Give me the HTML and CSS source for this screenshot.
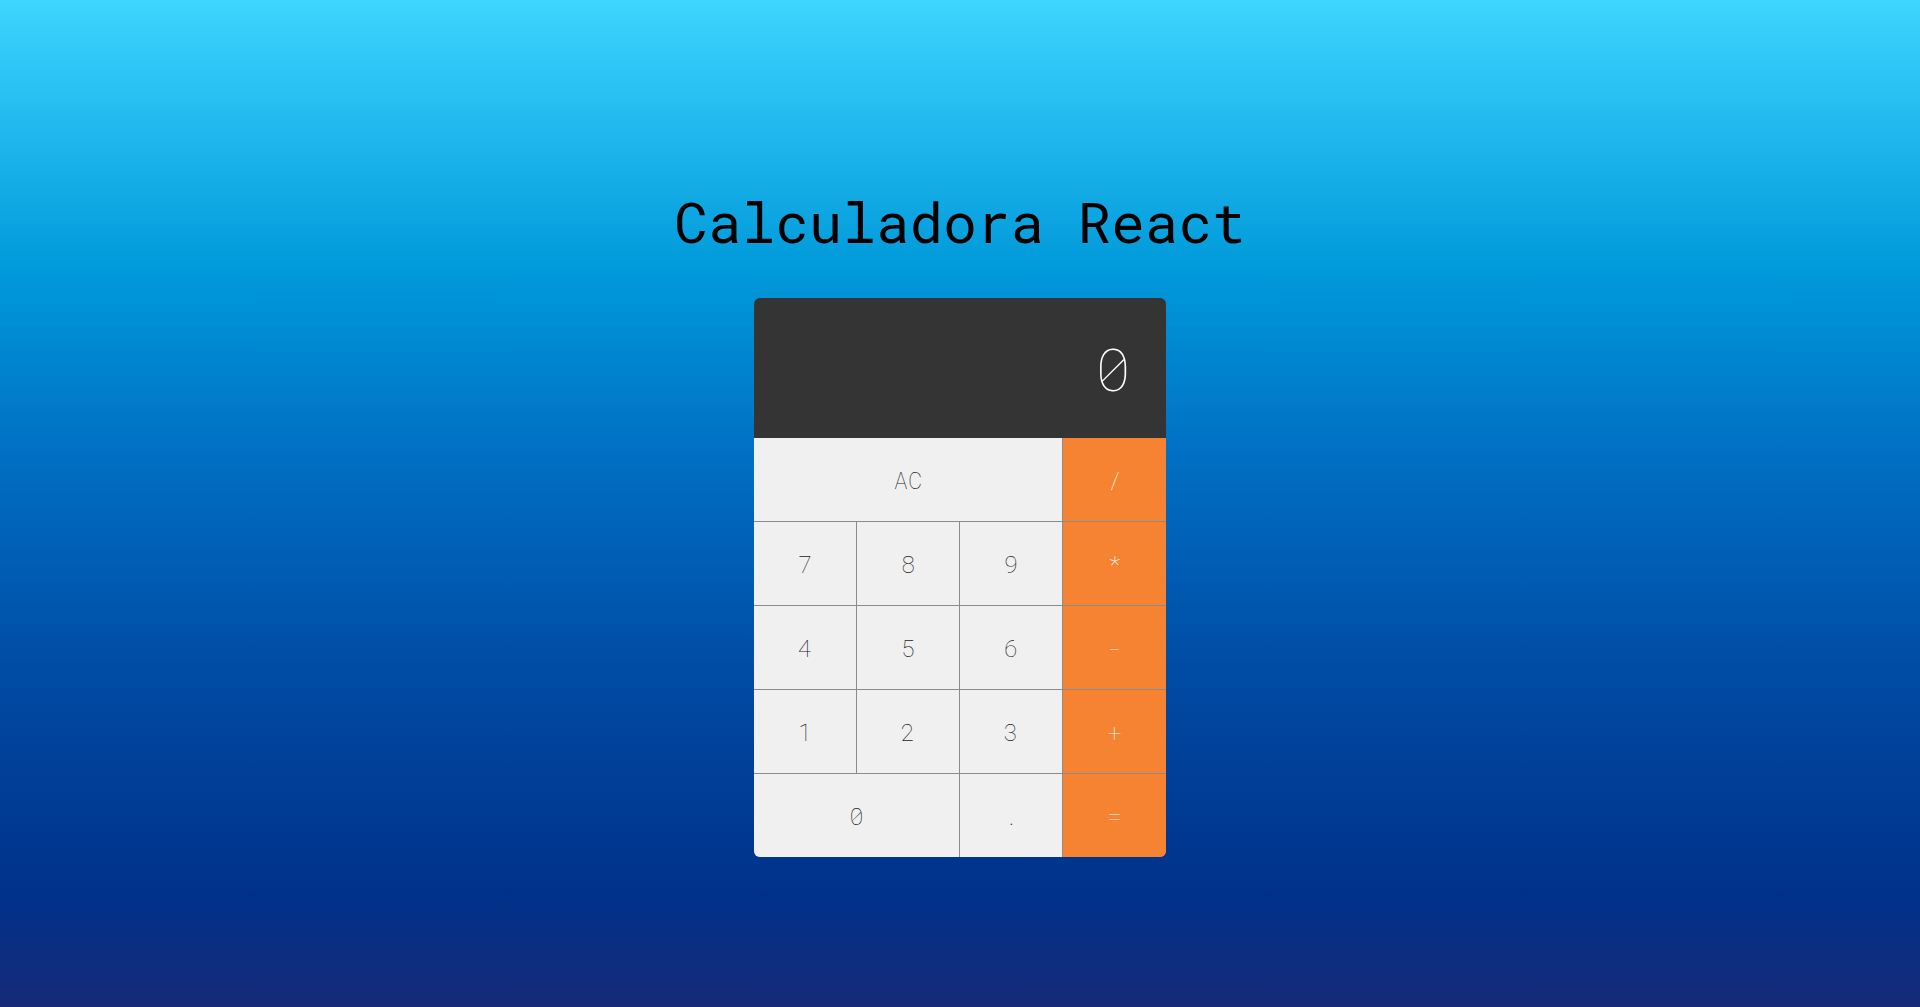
FILE: index.html
```html
<!DOCTYPE html>
<html lang="es">
<head>
<meta charset="utf-8">
<title>Calculadora React</title>
<link rel="stylesheet" href="styles.css">
</head>
<body>
<div class="app">
  <h1 class="title">Calculadora React</h1>
  <div class="calculator">
    <div class="display">0</div>
    <div class="keys">
      <button class="key span-3">AC</button>
      <button class="key op">/</button>
      <button class="key">7</button>
      <button class="key">8</button>
      <button class="key">9</button>
      <button class="key op">*</button>
      <button class="key">4</button>
      <button class="key">5</button>
      <button class="key">6</button>
      <button class="key op">-</button>
      <button class="key">1</button>
      <button class="key">2</button>
      <button class="key">3</button>
      <button class="key op">+</button>
      <button class="key span-2">0</button>
      <button class="key">.</button>
      <button class="key op">=</button>
    </div>
  </div>
</div>
</body>
</html>
```
FILE: styles.css
```css
html, body {
  margin: 0;
  padding: 0;
}
body {
  min-height: 100vh;
  background: linear-gradient(to bottom, #3ed5ff 0%, #0099da 27%, #0070c4 45%, #0049a2 68%, #00318a 89%, #162a77 100%);
  font-family: "Roboto Mono", "DejaVu Sans Mono", "Liberation Mono", monospace;
}
.app {
  display: flex;
  flex-direction: column;
  align-items: center;
  padding-top: 193px;
}
.title {
  margin: 0;
  font-size: 56px;
  line-height: 56px;
  font-weight: 400;
  color: #000;
}
.calculator {
  margin-top: 49px;
  width: 412px;
  border-radius: 6px;
  overflow: hidden;
}
.display {
  height: 140px;
  background: #343434;
  color: #fff;
  font-size: 60px;
  font-weight: 100;
  display: flex;
  align-items: center;
  justify-content: flex-end;
  padding: 0 35px 2px 0;
  box-sizing: border-box;
}
.keys {
  display: grid;
  grid-template-columns: 102px 102px 102px 103px;
  grid-auto-rows: 83px;
  gap: 1px;
  background: #8b8b8b;
}
.key {
  border: 0;
  margin: 0;
  padding: 0;
  background: #f0f0f0;
  color: #222;
  font-family: inherit;
  font-size: 24px;
  font-weight: 100;
}
.key.op {
  background: #f58331;
  color: #fff;
}
.span-2 { grid-column: span 2; }
.span-3 { grid-column: span 3; }
```
